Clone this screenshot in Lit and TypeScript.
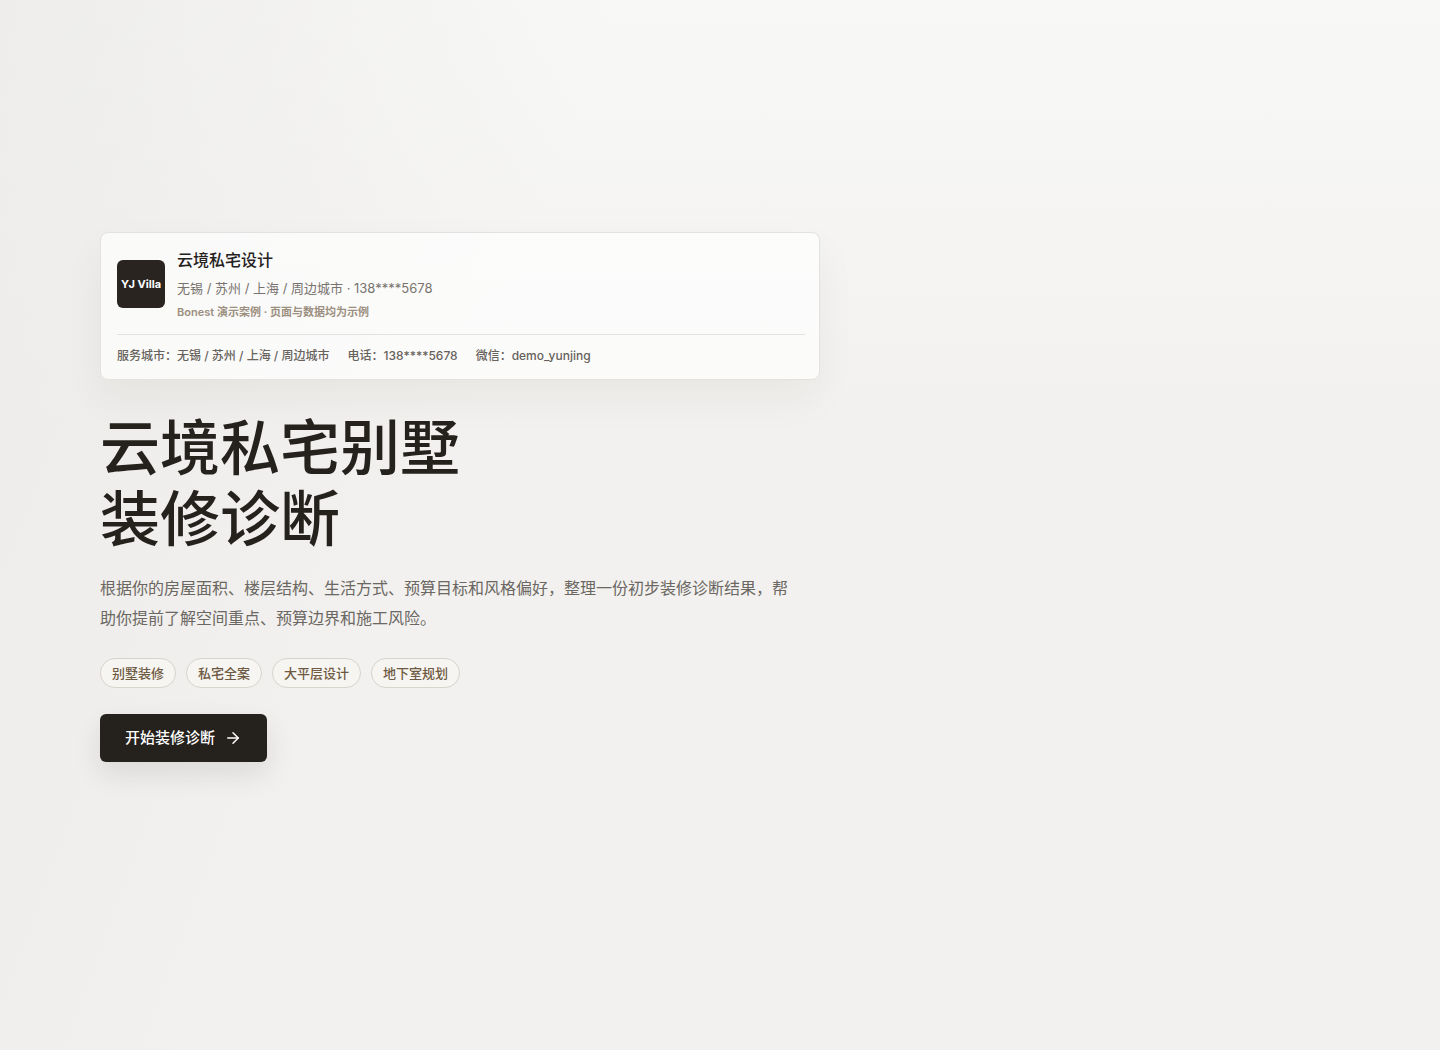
import { LitElement, html, css } from "lit";
import { customElement } from "lit/decorators.js";

@customElement("app-root")
export class AppRoot extends LitElement {
  static styles = css`
    :host {
      display: block;
      font-family: Inter, "Noto Sans CJK SC", sans-serif;
      color: #25211d;
    }
    * {
      box-sizing: border-box;
    }
    .page {
      min-height: 100vh;
      display: flex;
      flex-direction: column;
      justify-content: center;
      padding: 48px 100px 104px;
      background:
        linear-gradient(110deg, rgba(234, 233, 231, 0.75), rgba(236, 235, 233, 0) 34%),
        linear-gradient(180deg, #f8f8f6 0, #f2f1ef 420px);
    }
    .hero {
      width: 100%;
      max-width: 720px;
    }
    .card {
      padding: 15px 14px 14px 16px;
      border: 1px solid #e4e2df;
      border-radius: 8px;
      background: rgba(255, 255, 255, 0.68);
      box-shadow: 0 18px 40px rgba(37, 33, 29, 0.05);
    }
    .brand {
      display: flex;
      align-items: center;
      gap: 12px;
    }
    .logo {
      width: 48px;
      height: 48px;
      flex: none;
      display: grid;
      place-items: center;
      border-radius: 6px;
      background: #29241f;
      color: #fff;
      font-size: 11px;
      font-weight: 700;
      white-space: nowrap;
    }
    .name {
      margin: 0;
      font-size: 16px;
      line-height: 24px;
      font-weight: 500;
    }
    .area {
      margin: 4px 0 0;
      font-size: 13px;
      line-height: 24px;
      color: #78736e;
    }
    .note {
      margin: 4px 0 0;
      font-size: 11px;
      line-height: 16px;
      font-weight: 600;
      color: #9b8f7f;
    }
    .contacts {
      display: flex;
      flex-wrap: wrap;
      gap: 8px 18px;
      margin: 14px 0 0;
      padding-top: 12px;
      border-top: 1px solid #e4e2df;
      font-size: 12px;
      line-height: 18px;
      font-weight: 500;
      color: #67625c;
    }
    .title {
      margin: 33px 0 0;
      font-size: 60px;
      line-height: 71px;
      font-weight: 500;
    }
    .title span {
      display: block;
    }
    .lead {
      max-width: 700px;
      margin: 18px 0 0;
      font-size: 16px;
      line-height: 30px;
      color: #6b6762;
    }
    .tags {
      display: flex;
      flex-wrap: wrap;
      gap: 10px;
      margin: 25px 0 0;
      padding: 0;
      list-style: none;
    }
    .tag {
      padding: 5px 11px;
      border: 1px solid #d8d3cb;
      border-radius: 15px;
      background: #f7f5f1;
      font-size: 13px;
      line-height: 18px;
      font-weight: 500;
      color: #6e5a43;
    }
    .start {
      display: inline-flex;
      align-items: center;
      gap: 9px;
      height: 48px;
      margin: 26px 0 0;
      padding: 0 25px;
      border: 0;
      border-radius: 6px;
      background: #25211d;
      color: #fff;
      font: inherit;
      font-size: 15px;
      line-height: 20px;
      font-weight: 500;
      cursor: pointer;
      box-shadow: 0 12px 28px rgba(37, 33, 29, 0.1);
    }
  `;

  private tags = ["别墅装修", "私宅全案", "大平层设计", "地下室规划"];

  render() {
    return html`
      <main class="page">
        <div class="hero">
          <section class="card">
            <div class="brand">
              <div class="logo">YJ Villa</div>
              <div>
                <p class="name">云境私宅设计</p>
                <p class="area">无锡 / 苏州 / 上海 / 周边城市 · 138****5678</p>
                <p class="note">Bonest 演示案例 · 页面与数据均为示例</p>
              </div>
            </div>
            <div class="contacts">
              <span>服务城市：无锡 / 苏州 / 上海 / 周边城市</span>
              <span>电话：138****5678</span>
              <span>微信：demo_yunjing</span>
            </div>
          </section>
          <h1 class="title"><span>云境私宅别墅</span><span>装修诊断</span></h1>
          <p class="lead">根据你的房屋面积、楼层结构、生活方式、预算目标和风格偏好，整理一份初步装修诊断结果，帮助你提前了解空间重点、预算边界和施工风险。</p>
          <ul class="tags">
            ${this.tags.map((tag) => html`<li class="tag">${tag}</li>`)}
          </ul>
          <button class="start" type="button">
            开始装修诊断
            <svg width="18" height="18" viewBox="0 0 24 24" fill="none" stroke="currentColor" stroke-width="2" stroke-linecap="round" stroke-linejoin="round" aria-hidden="true">
              <path d="M5 12h14" />
              <path d="m12 5 7 7-7 7" />
            </svg>
          </button>
        </div>
      </main>
    `;
  }
}
